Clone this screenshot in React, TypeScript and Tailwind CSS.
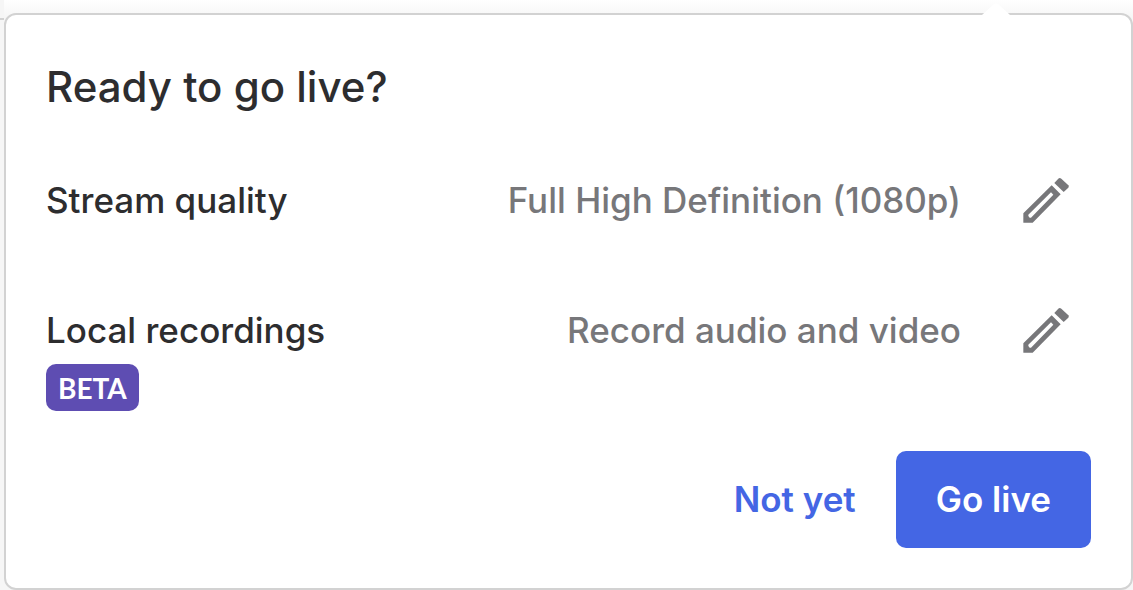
interface SettingRowProps {
  label: string;
  value: string;
  badge?: string;
}

function PencilIcon() {
  return (
    <svg className="h-12 w-12" viewBox="66 48 144 144" fill="currentColor" aria-hidden="true">
      <path
        fillRule="evenodd"
        d="M70 160 155 76 182 103 98 188H70ZM85 168 89 173H93L160 104 153 97 85 164Z"
      />
      <path d="M163 69 175 56Q179 52 184 56L205 76Q208 79 205 83L191 96Z" />
    </svg>
  );
}

function SettingRow({ label, value, badge }: SettingRowProps) {
  return (
    <div>
      <div className="flex items-center pr-[21px]">
        <span className="text-[35px] leading-12 text-[#2d2d2f]">{label}</span>
        <span className="ml-auto text-[35px] leading-12 text-[#77777a]">{value}</span>
        <button type="button" aria-label={`Edit ${label}`} className="ml-[61px] text-[#77777a]">
          <PencilIcon />
        </button>
      </div>
      {badge && (
        <span className="mt-[10px] flex h-[47px] w-fit items-center rounded-[10px] bg-[#5e4db2] px-3 font-['Lato',sans-serif] text-[28px] font-bold text-white">
          {badge}
        </span>
      )}
    </div>
  );
}

export default function App() {
  return (
    <div className="flex min-h-screen bg-[#fafafa] font-['Inter',sans-serif] font-medium">
      {/* edge of the toolbar behind the popover */}
      <div className="w-1 shrink-0 bg-[#f6f6f6] pt-[18px]">
        <div className="h-0.5 bg-[#d2d2d2]" />
      </div>
      <div className="flex min-w-0 flex-1 flex-col bg-linear-to-b from-white to-[#f6f6f6] to-[18px] pt-[13px]">
        <section
          role="dialog"
          aria-labelledby="go-live-title"
          className="relative flex-1 rounded-xl border-2 border-[#d2d2d2] bg-white px-10 pt-[47px] pb-10"
        >
          <svg
            className="absolute -top-3 right-[121px] h-3 w-7"
            viewBox="0 0 28 12"
            fill="white"
            aria-hidden="true"
          >
            <path d="M0 12 12 1Q14 0 16 1L28 12Z" />
          </svg>
          <h1 id="go-live-title" className="text-[42px] leading-[50px] text-[#2d2d2f]">
            Ready to go live?
          </h1>
          <div className="mt-16 flex flex-col gap-[82px]">
            <SettingRow label="Stream quality" value="Full High Definition (1080p)" />
            <SettingRow label="Local recordings" value="Record audio and video" badge="BETA" />
          </div>
          <div className="mt-10 flex items-center justify-end gap-10 text-[35px] font-semibold">
            <button type="button" className="text-[#4466e4]">
              Not yet
            </button>
            <button type="button" className="h-[97px] rounded-[10px] bg-[#4466e4] px-10 text-white">
              Go live
            </button>
          </div>
        </section>
      </div>
    </div>
  );
}
